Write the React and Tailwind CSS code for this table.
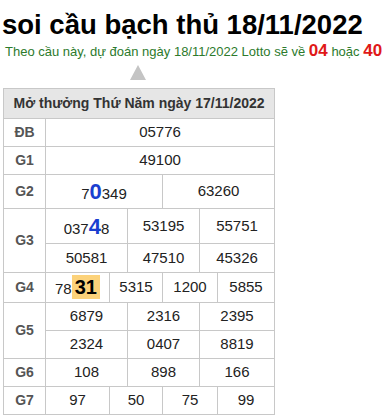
const rows = [
  { label: "ĐB", cells: [[6, "05776"]] },
  { label: "G1", cells: [[6, "49100"]] },
];

function Cell({ span, children, className = "" }) {
  return (
    <td colSpan={span} className={"border border-[#c8c8c8] text-center text-[15px] text-[#222] " + className}>
      {children}
    </td>
  );
}

function Label({ children, rowSpan }) {
  return (
    <td rowSpan={rowSpan} className="border border-[#c8c8c8] text-center text-[14px] font-bold text-[#555]">
      {children}
    </td>
  );
}

export default function App() {
  return (
    <div className="w-[391px] h-[416px] bg-white font-['Liberation_Sans',Arial,sans-serif] overflow-hidden">
      <h1 className="pl-[2px] pt-[9px] text-[27.5px] leading-[32px] font-bold text-black whitespace-nowrap">
        soi cầu bạch thủ 18/11/2022
      </h1>
      <p className="pl-[5px] mt-[1px] text-[13px] leading-[18px] text-[#2c7a2c] whitespace-nowrap">
        Theo cầu này, dự đoán ngày 18/11/2022 Lotto sẽ về{" "}
        <span className="text-[17px] font-bold text-[#e01818]">04</span> hoặc{" "}
        <span className="text-[17px] font-bold text-[#e01818]">40</span>
      </p>
      <div className="w-[270px] ml-[3px] flex justify-center mt-[4px] mb-[8px]">
        <div className="w-0 h-0 border-l-[8px] border-r-[8px] border-b-[15px] border-l-transparent border-r-transparent border-b-[#c4c4c4]" />
      </div>
      <table className="ml-[3px] w-[271px] table-fixed border-collapse">
        <colgroup>
          <col className="w-[42px]" />
          <col className="w-[64px]" />
          <col className="w-[18px]" />
          <col className="w-[35px]" />
          <col className="w-[37px]" />
          <col className="w-[18px]" />
          <col className="w-[57px]" />
        </colgroup>
        <tbody>
          <tr className="h-[30px] bg-[#e6e6e6]">
            <td colSpan={7} className="border border-[#c8c8c8] text-center text-[14px] font-bold text-[#333] whitespace-nowrap">
              Mở thưởng Thứ Năm ngày 17/11/2022
            </td>
          </tr>
          {rows.map((r) => (
            <tr key={r.label} className="h-[28px]">
              <Label>{r.label}</Label>
              {r.cells.map(([s, v], i) => (
                <Cell key={i} span={s}>{v}</Cell>
              ))}
            </tr>
          ))}
          <tr className="h-[34px]">
            <Label>G2</Label>
            <Cell span={3}>
              7<span className="text-[22px] font-bold text-[#1a3fd0]">0</span>349
            </Cell>
            <Cell span={3}>63260</Cell>
          </tr>
          <tr className="h-[35px]">
            <Label rowSpan={2}>G3</Label>
            <Cell span={2}>
              037<span className="text-[22px] font-bold text-[#1a3fd0]">4</span>8
            </Cell>
            <Cell span={2}>53195</Cell>
            <Cell span={2}>55751</Cell>
          </tr>
          <tr className="h-[29px]">
            <Cell span={2}>50581</Cell>
            <Cell span={2}>47510</Cell>
            <Cell span={2}>45326</Cell>
          </tr>
          <tr className="h-[30px]">
            <Label>G4</Label>
            <Cell span={1}>
              78<span className="inline-block px-[3px] bg-[#fcd27a] text-[20px] leading-[24px] font-bold text-black">31</span>
            </Cell>
            <Cell span={2}>5315</Cell>
            <Cell span={2}>1200</Cell>
            <Cell span={1}>5855</Cell>
          </tr>
          <tr className="h-[28px]">
            <Label rowSpan={2}>G5</Label>
            <Cell span={2}>6879</Cell>
            <Cell span={2}>2316</Cell>
            <Cell span={2}>2395</Cell>
          </tr>
          <tr className="h-[28px]">
            <Cell span={2}>2324</Cell>
            <Cell span={2}>0407</Cell>
            <Cell span={2}>8819</Cell>
          </tr>
          <tr className="h-[28px]">
            <Label>G6</Label>
            <Cell span={2}>108</Cell>
            <Cell span={2}>898</Cell>
            <Cell span={2}>166</Cell>
          </tr>
          <tr className="h-[28px]">
            <Label>G7</Label>
            <Cell span={1}>97</Cell>
            <Cell span={2}>50</Cell>
            <Cell span={2}>75</Cell>
            <Cell span={1}>99</Cell>
          </tr>
        </tbody>
      </table>
    </div>
  );
}
